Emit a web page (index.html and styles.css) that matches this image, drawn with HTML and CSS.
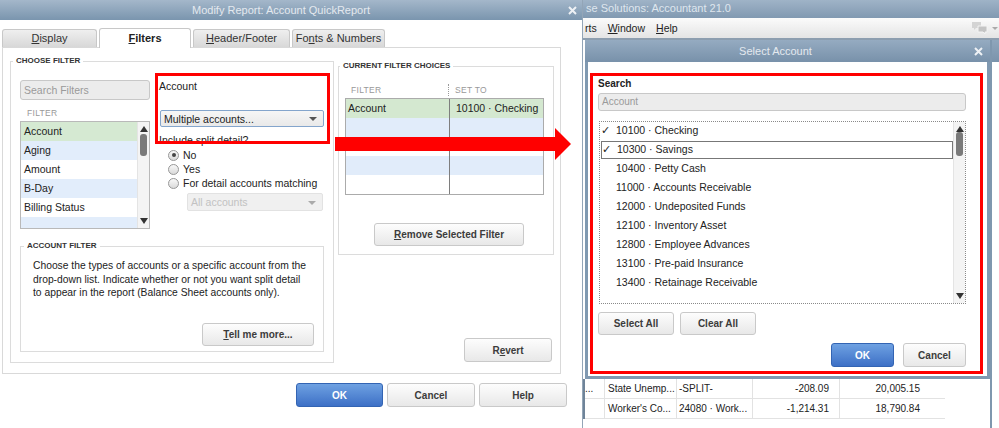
FILE: index.html
```html
<!DOCTYPE html>
<html lang="en">
<head>
  <meta charset="UTF-8" />
  <title>Modify Report – Select Account</title>
  <link rel="stylesheet" href="styles.css">
</head>
<body>
<div class="screen">

  <!-- left dialog -->
  <section class="dlg modify">
    <header class="titlebar">
      <span class="title">Modify Report: Account QuickReport</span>
      <span class="close"><svg width="9" height="9" viewBox="0 0 9 9"><path d="M1 1L8 8M8 1L1 8" stroke="#eef1f5" stroke-width="2"/></svg></span>
    </header>
    <div class="dlg-body">
      <nav class="tabs">
        <span class="tab t1"><u>D</u>isplay</span>
        <span class="tab t2 active"><u>F</u>ilters</span>
        <span class="tab t3"><u>H</u>eader/Footer</span>
        <span class="tab t4">Fo<u>n</u>ts &amp; Numbers</span>
      </nav>
      <div class="panel">
        <fieldset class="group choose">
          <legend>Choose Filter</legend>
          <div class="choose-body">
            <div class="choose-top">
              <div class="filter-col">
                <div class="search">Search Filters</div>
                <div class="sublabel">FILTER</div>
                <div class="listbox">
                  <ul class="rows">
                    <li class="sel">Account</li>
                    <li class="alt">Aging</li>
                    <li>Amount</li>
                    <li class="alt">B-Day</li>
                    <li>Billing Status</li>
                    <li class="alt"></li>
                  </ul>
                  <div class="vscroll">
                    <span class="arr up"></span>
                    <span class="thumb"></span>
                    <span class="arr down"></span>
                  </div>
                </div>
              </div>
              <div class="setting-col">
                <div class="field-label">Account</div>
                <div class="combo main">Multiple accounts...<span class="caret"></span></div>
                <div class="field-label split">Include split detail?</div>
                <div class="radio on"><span class="dot"></span>No</div>
                <div class="radio"><span class="dot"></span>Yes</div>
                <div class="radio"><span class="dot"></span>For detail accounts matching</div>
                <div class="combo disabled">All accounts<span class="caret"></span></div>
              </div>
            </div>
            <fieldset class="group help">
              <legend>Account Filter</legend>
              <p>Choose the types of accounts or a specific account from the<br>drop-down list. Indicate whether or not you want split detail<br>to appear in the report (Balance Sheet accounts only).</p>
              <button class="btn more"><u>T</u>ell me more...</button>
            </fieldset>
          </div>
        </fieldset>
        <div class="right-col">
          <fieldset class="group current">
            <legend>Current Filter Choices</legend>
            <div class="current-body">
              <div class="thead"><span class="h1">FILTER</span><span class="h2">SET TO</span></div>
              <div class="choices">
                <div class="crow sel"><span>Account</span><span>10100 · Checking</span></div>
                <div class="crow alt"><span></span><span></span></div>
                <div class="crow"><span></span><span></span></div>
                <div class="crow alt"><span></span><span></span></div>
                <div class="crow"><span></span><span></span></div>
              </div>
              <button class="btn remove"><u>R</u>emove Selected Filter</button>
            </div>
          </fieldset>
          <button class="btn revert">R<u>e</u>vert</button>
        </div>
      </div>
      <div class="actions">
        <button class="btn ok">OK</button>
        <button class="btn cancel">Cancel</button>
        <button class="btn help-btn">Help</button>
      </div>
    </div>
  </section>

  <!-- background app with Select Account dialog -->
  <section class="app">
    <header class="app-title">se Solutions: Accountant 21.0</header>
    <div class="menubar">
      <span class="menu">rts</span>
      <span class="menu"><u>W</u>indow</span>
      <span class="menu"><u>H</u>elp</span>
      <span class="menu-icons">
        <svg width="18" height="14" viewBox="0 0 18 14"><path d="M1 1h9v6H5l-2 2V7H1z" fill="#d4d4d4"/><path d="M7 5h9v6h-2v2l-2-2H7z" fill="#c4c4c4" stroke="#f3f3f3" stroke-width="1"/></svg>
        <span class="mini-caret"></span>
      </span>
    </div>
    <div class="mdi">
      <div class="mdi-main">
        <section class="dlg select">
          <header class="titlebar small">
            <span class="title">Select Account</span>
            <span class="close"><svg width="9" height="9" viewBox="0 0 9 9"><path d="M1 1L8 8M8 1L1 8" stroke="#eef1f5" stroke-width="2"/></svg></span>
          </header>
          <div class="select-body">
            <div class="search-label">Search</div>
            <div class="search wide">Account</div>
            <div class="acct-list">
              <ul class="acct-rows">
                <li><span class="chk">✓</span>10100 · Checking</li>
                <li class="focus"><span class="chk">✓</span>10300 · Savings</li>
                <li><span class="chk"></span>10400 · Petty Cash</li>
                <li><span class="chk"></span>11000 · Accounts Receivable</li>
                <li><span class="chk"></span>12000 · Undeposited Funds</li>
                <li><span class="chk"></span>12100 · Inventory Asset</li>
                <li><span class="chk"></span>12800 · Employee Advances</li>
                <li><span class="chk"></span>13100 · Pre-paid Insurance</li>
                <li><span class="chk"></span>13400 · Retainage Receivable</li>
              </ul>
              <div class="vscroll tall">
                <span class="arr up"></span>
                <span class="thumb"></span>
                <span class="arr down"></span>
              </div>
            </div>
            <div class="sel-actions">
              <button class="btn">Select All</button>
              <button class="btn">Clear All</button>
            </div>
            <div class="sel-footer">
              <button class="btn ok">OK</button>
              <button class="btn cancel">Cancel</button>
            </div>
          </div>
        </section>
        <div class="report">
          <div class="rrow"><span class="c0">...</span><span class="c1">State Unemp...</span><span class="c2">-SPLIT-</span><span class="c3">-208.09</span><span class="c4">20,005.15</span></div>
          <div class="rrow"><span class="c0"></span><span class="c1">Worker's Co...</span><span class="c2">24080 · Work...</span><span class="c3">-1,214.31</span><span class="c4">18,790.84</span></div>
        </div>
      </div>
      <div class="sliver"></div>
    </div>
  </section>

  <!-- red annotations -->
  <div class="mark mark-account"></div>
  <div class="mark mark-select"></div>
  <svg class="arrow" width="237" height="34" viewBox="0 0 237 34"><polygon points="0,10 220,10 220,1 236,17 220,33 220,24 0,24" fill="#f00"/></svg>
</div>
</body>
</html>
```

FILE: styles.css
```css
* { box-sizing: border-box; }
body { margin: 0; font-family: "Liberation Sans", Arial, sans-serif; font-size: 10px; color: #222; background: #fff; }
ul { margin: 0; padding: 0; list-style: none; }
button { font-family: inherit; }

.screen { position: relative; display: flex; width: 999px; height: 428px; overflow: hidden; background: #fff; }

/* title bars */
.titlebar { display: flex; align-items: center; height: 20px; background: linear-gradient(#a4b7ca, #7a95ae); color: #e4e9ef; font-size: 11px; }
.titlebar .title { flex: 1; text-align: center; }
.titlebar .close { width: 20px; display: flex; justify-content: center; }
.titlebar.small { height: 22px; background: linear-gradient(#95abc1, #7891aa); }
.titlebar.small .close { width: 24px; }

/* left dialog */
.modify { width: 582px; flex: none; background: #fff; }
.dlg-body { padding: 8px 15px 0 2px; }
.tabs { display: flex; gap: 2px; height: 19px; align-items: flex-end; }
.tab { height: 18px; border: 1px solid #c8c8c8; border-bottom: none; border-radius: 3px 3px 0 0;
       background: linear-gradient(#efefef, #d8d8d8); text-align: center; line-height: 17px; font-size: 11px; color: #333; }
.tab.t1 { width: 95px; }
.tab.t2 { width: 92px; }
.tab.t3 { width: 97px; }
.tab.t4 { width: 93px; }
.tab.active { height: 20px; margin-bottom: -1px; background: #fff; position: relative; z-index: 1; font-weight: bold; color: #222; line-height: 19px; }

.panel { display: flex; gap: 4px; width: 559px; height: 327px; border: 1px solid #d9d9d9; padding: 8px 6px 10px 7px; }

.group { margin: 0; padding: 0; border: 1px solid #dcdcdc; min-width: 0; }
.group legend { font-size: 8px; font-weight: bold; color: #333; text-transform: uppercase; line-height: 10px; padding: 0 3px; margin-left: 2px; }

.choose { width: 324px; flex: none; }
.choose-body { padding: 14px 4px 9px 9px; }
.choose-top { display: grid; grid-template-columns: 130px 1fr; gap: 5px; }

.search { height: 20px; border: 1px solid #c8c8c8; border-radius: 3px; background: #ececec; color: #9a9a9a; padding-left: 3px; line-height: 18px; font-size: 10.5px; }
.sublabel { margin: 8px 0 2px 7px; line-height: 11px; font-size: 8.5px; color: #999; letter-spacing: 0.3px; }

.listbox { position: relative; display: flex; height: 108px; border: 1px solid #b9b9b9; overflow: hidden; }
.rows { flex: 1; }
.rows li { height: 19px; line-height: 18px; padding-left: 3px; font-size: 10.5px; color: #222; }
.rows li.sel { background: #d5e9d2; }
.rows li.alt { background: #e2edfb; }

.vscroll { position: relative; width: 12px; flex: none; background: #f4f4f4; border-left: 1px solid #e4e4e4; }
.vscroll .arr { position: absolute; left: 2px; width: 0; height: 0; border-left: 4px solid transparent; border-right: 4px solid transparent; }
.vscroll .arr.up { top: 4px; border-bottom: 6px solid #333; }
.vscroll .arr.down { bottom: 4px; border-top: 6px solid #333; }
.vscroll .thumb { position: absolute; left: 2px; top: 12px; width: 7px; height: 22px; border-radius: 3px; background: #7a7a7a; }

.setting-col { padding-left: 4px; }
.field-label { line-height: 13px; font-size: 10.5px; color: #222; }
.field-label.split { margin-top: 7px; line-height: 12px; }
.combo { position: relative; display: flex; align-items: center; height: 17px; margin: 17px 0 0 1px; width: 164px; padding-left: 3px;
         border: 1px solid #84a5cc; border-radius: 2px; background: linear-gradient(#f6f6f6, #e9e9e9); font-size: 10.5px; color: #222; }
.combo .caret { position: absolute; right: 6px; top: 6px; border-left: 4px solid transparent; border-right: 4px solid transparent; border-top: 4px solid #555; }
.combo.disabled { margin: 3px 0 0 28px; width: 136px; height: 18px; border-color: #e2e2e2; background: #f0f0f0; color: #c2c2c2; }
.combo.disabled .caret { border-top-color: #aaa; top: 7px; }

.radio { display: flex; align-items: center; gap: 4px; height: 14px; padding-left: 9px; font-size: 10.5px; color: #222; }
.radio:first-of-type { margin-top: 2px; }
.field-label.split + .radio { margin-top: 2px; }
.radio .dot { position: relative; width: 11px; height: 11px; border: 1px solid #979797; border-radius: 50%; background: linear-gradient(#f8f8f8, #dadada); }
.radio.on .dot::after { content: ""; position: absolute; left: 2.5px; top: 2.5px; width: 4px; height: 4px; border-radius: 50%; background: #444; }

.help { margin-top: 12px; width: 304px; padding: 0 9px 5px 12px; }
.help legend { margin-left: -9px; }
.help p { margin: 8px 0 0; line-height: 13.5px; font-size: 10.3px; color: #222; }
.btn { height: 23px; border: 1px solid #c9c9c9; border-radius: 3px; background: linear-gradient(#fdfdfd, #e8e8e8);
       color: #3c3c3c; font-size: 10px; font-weight: bold; padding: 0; }
.btn.more { display: block; width: 112px; margin: 23px 0 0 auto; }

.right-col { display: flex; flex-direction: column; justify-content: space-between; width: 216px; flex: none; }
.current { margin-top: 5px; }
.current legend { margin-left: 1px; }
.current-body { padding: 13px 9px 8px 6px; }
.thead { display: flex; height: 12px; margin-bottom: 2px; font-size: 8.5px; color: #999; line-height: 12px; letter-spacing: 0.3px; }
.thead .h1 { width: 104px; padding-left: 6px; border-right: 1px dotted #999; }
.thead .h2 { padding-left: 6px; }
.choices { border: 1px solid #ababab; }
.crow { display: flex; height: 19px; line-height: 18px; font-size: 10.5px; }
.crow span:first-child { width: 104px; padding-left: 2px; border-right: 1px solid #7e7e7e; }
.crow span:last-child { padding-left: 6px; }
.crow.sel { background: #d4e8d0; }
.crow.alt { background: #e1ecfa; }
.btn.remove { display: block; width: 150px; margin: 28px 0 0 29px; }
.btn.revert { align-self: flex-end; width: 88px; height: 24px; margin: 0 2px 1px 0; }

.actions { display: flex; justify-content: flex-end; gap: 4px; margin-top: 9px; }
.actions .btn { height: 24px; width: 88px; }
.actions .btn.ok { width: 87px; }
.btn.ok { background: linear-gradient(#6ea1e2, #3d70c6); border-color: #3364b3; color: #fff; }

/* background app */
.app { flex: 1; display: flex; flex-direction: column; border-left: 1px solid #93a5b7; }
.app-title { height: 18px; padding-left: 3px; line-height: 17px; background: linear-gradient(#9fb3c7, #8199b1); color: #dfe6ee; font-size: 11px; white-space: nowrap; }
.menubar { display: flex; align-items: center; height: 22px; padding-left: 2px; gap: 11px; background: linear-gradient(#fbfbfb, #e4e4e4); border-bottom: 2px solid #8d9eaf; font-size: 10.5px; color: #222; }
.menu-icons { margin-left: auto; display: flex; align-items: center; gap: 3px; padding-right: 1px; }
.mini-caret { border-left: 3px solid transparent; border-right: 3px solid transparent; border-top: 3px solid #aaa; }

.mdi { flex: 1; display: flex; }
.mdi-main { width: 407px; flex: none; display: flex; flex-direction: column; }
.select { margin-left: 2px; width: 405px; }
.select-body { border: 3px solid #8099b1; border-top: none; padding: 16px 21px 9px 10px; background: #fff; }
.search-label { line-height: 12px; font-weight: bold; font-size: 10px; color: #222; }
.search.wide { margin-top: 3px; height: 18px; line-height: 16px; font-size: 10px; }
.acct-list { display: flex; height: 183px; margin: 10px 0 0 1px; border: 1px dotted #8a8a8a; }
.acct-rows { flex: 1; padding-left: 1px; }
.acct-rows li { display: flex; height: 19px; line-height: 17px; font-size: 10.5px; color: #222; }
.acct-rows li.focus { border: 1px solid #777; height: 18px; margin-bottom: 1px; line-height: 15px; }
.acct-rows .chk { width: 15px; flex: none; font-size: 11px; }
.vscroll.tall .thumb { top: 10px; height: 24px; }
.sel-actions { display: flex; gap: 6px; margin-top: 8px; }
.sel-actions .btn { width: 76px; }
.sel-footer { display: flex; justify-content: flex-end; gap: 9px; margin-top: 8px; }
.sel-footer .btn { width: 63px; height: 24px; }

.report { display: flex; flex-direction: column; border-left: 2px solid #6f8499; }
.rrow { display: flex; height: 20px; line-height: 19px; font-size: 10px; color: #222; border-bottom: 1px solid #e2e2e2; width: 360px; }
.rrow span { border-right: 1px solid #e2e2e2; white-space: nowrap; overflow: hidden; }
.rrow .c0 { width: 20px; }
.rrow .c1 { width: 72px; padding-left: 3px; }
.rrow .c2 { width: 76px; padding-left: 2px; }
.rrow .c3 { width: 87px; text-align: right; padding-right: 10px; }
.rrow .c4 { width: 103px; text-align: right; padding-right: 23px; border-right: none; }

.sliver { flex: 1; border-left: 2px solid #7f97ae; background: linear-gradient(#8fa6bc, #7a93ab) top / 100% 22px no-repeat, #fff; }

/* red annotations */
.mark { position: absolute; border: 3px solid #f00; }
.mark-account { left: 155px; top: 73px; width: 175px; height: 71px; }
.mark-select { left: 590px; top: 73px; width: 393px; height: 301px; }
.arrow { position: absolute; left: 335px; top: 127px; }
```
